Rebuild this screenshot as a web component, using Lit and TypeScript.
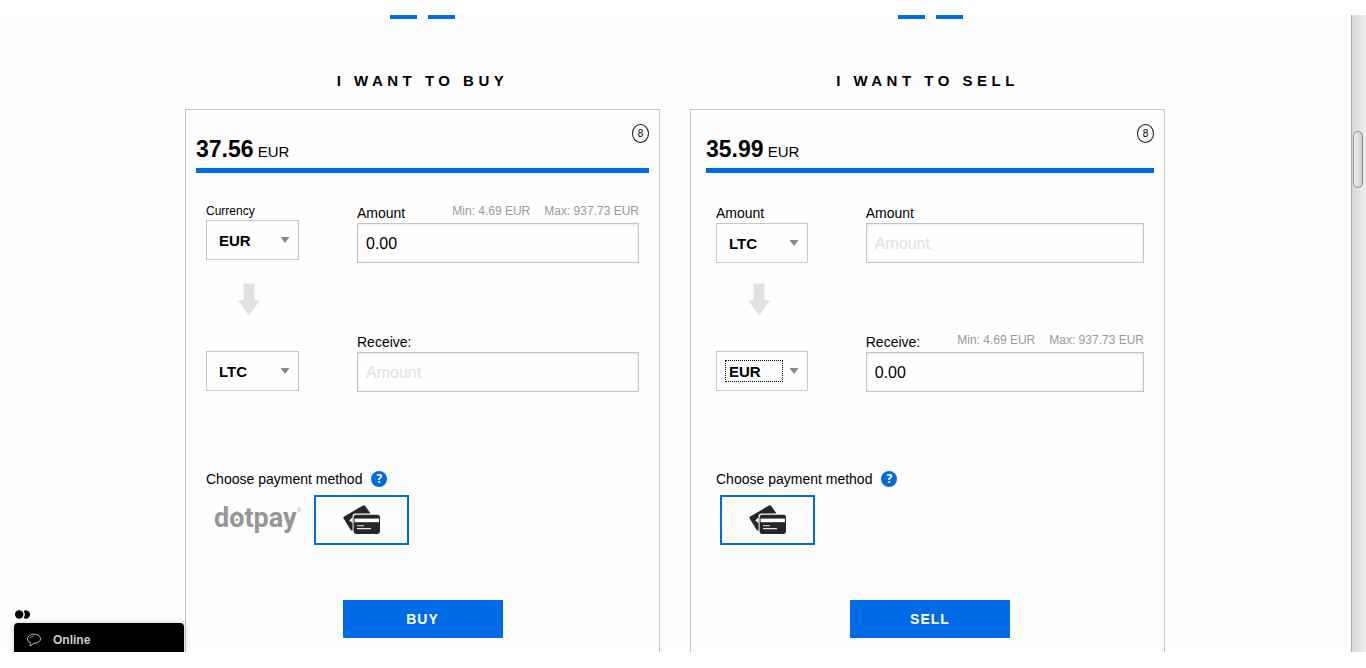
import { LitElement, html, css, svg, nothing } from "lit";
import { customElement, property } from "lit/decorators.js";

interface Side {
  id: string;
  title: string;
  price: string;
  fromLabel: string;
  smallLabel: boolean;
  from: string;
  to: string;
  focused: boolean;
  amount: string;
  receive: string;
  limitsOn: "amount" | "receive";
  dotpay: boolean;
  action: string;
}

const BUY: Side = {
  id: "buy",
  title: "I WANT TO BUY",
  price: "37.56",
  fromLabel: "Currency",
  smallLabel: true,
  from: "EUR",
  to: "LTC",
  focused: false,
  amount: "0.00",
  receive: "",
  limitsOn: "amount",
  dotpay: true,
  action: "BUY",
};

const SELL: Side = {
  id: "sell",
  title: "I WANT TO SELL",
  price: "35.99",
  fromLabel: "Amount",
  smallLabel: false,
  from: "LTC",
  to: "EUR",
  focused: true,
  amount: "",
  receive: "0.00",
  limitsOn: "receive",
  dotpay: false,
  action: "SELL",
};

const cards = svg`
  <g fill="#262626">
    <path d="M1.2 11.4 L20 0.5 Q21.5 -0.2 22.4 1.2 L27.5 8.6 H12.5 Q9.6 8.6 9.6 11.4 V25.6 Q8.2 26 7.4 24.6 L0.6 13.4 Q0 12.1 1.2 11.4 Z"/>
    <path d="M6.2 15.5 L9.6 12.2 V18 Z" fill="#fefefe"/>
    <rect x="10.6" y="9.8" width="26.4" height="19.2" rx="2.4"/>
  </g>
  <rect x="11.6" y="13.6" width="24.4" height="3.6" fill="#fefefe"/>
  <path d="M14 20.8 H21 M14 23.6 H28" stroke="#e8e8e8" stroke-width="1.1" fill="none"/>
`;

@customElement("trade-column")
class TradeColumn extends LitElement {
  @property({ attribute: false }) side!: Side;

  static styles = css`
    :host {
      display: flex;
      flex-direction: column;
      --inset-left: 10px;
      --inset-right: 10px;
    }
    :host([wide]) {
      --inset-left: 15px;
    }
    * {
      box-sizing: border-box;
    }
    .dashes {
      display: flex;
      justify-content: center;
      gap: 11px;
      padding-left: var(--inset-left);
      padding-right: var(--inset-right);
    }
    .dash {
      width: 27px;
      height: 4px;
      background: #006be6;
    }
    .title {
      margin: 52px 0 18px;
      font-size: 15px;
      line-height: 20px;
      font-weight: bold;
      letter-spacing: 0.3em;
      text-align: center;
    }
    .panel {
      flex: 1;
      border: 1px solid #c6c6c6;
      border-bottom: 0;
      padding: 14px var(--inset-right) 14px var(--inset-left);
    }
    .head {
      display: flex;
      justify-content: space-between;
      align-items: flex-start;
      border-bottom: 5px solid #006be6;
      padding-bottom: 2px;
    }
    .price {
      padding-top: 11px;
      font-size: 15px;
      line-height: 28px;
    }
    .value {
      font-size: 23px;
      font-weight: bold;
    }
    .timer {
      width: 17px;
      height: 19px;
      border: 1px solid #111;
      border-radius: 50%;
      font-size: 10px;
      line-height: 17px;
      text-align: center;
    }
    .form {
      padding: 30px 10px 0;
    }
    .fields {
      display: grid;
      grid-template-columns: 93fr 282fr;
      grid-template-rows: 60px 69px 60px;
      column-gap: 58px;
    }
    .caption {
      display: flex;
      justify-content: space-between;
      font-size: 14px;
      line-height: 20px;
    }
    .small,
    .limits {
      font-size: 12px;
      line-height: 17px;
    }
    .limits {
      display: flex;
      gap: 14px;
      color: #999;
    }
    .text {
      display: block;
      width: 100%;
      height: 40px;
      margin: 0;
      padding: 1px 8px 0;
      border: 1px solid #c4c4c4;
      border-radius: 0;
      background: #fefefe;
      box-shadow: inset 0 1px 3px rgba(0, 0, 0, 0.1);
      color: #000;
      font: 16px "Liberation Sans", Arial, sans-serif;
      outline: none;
    }
    .text::placeholder {
      color: #e0e0e0;
      opacity: 1;
    }
    .picker {
      display: grid;
    }
    .picker > * {
      grid-area: 1 / 1;
    }
    .select {
      appearance: none;
      width: 100%;
      height: 40px;
      margin: 0;
      padding: 1px 12px 0;
      border: 1px solid #c6c6c6;
      border-radius: 0;
      background: #fefefe;
      color: #000;
      font: bold 15px "Liberation Sans", Arial, sans-serif;
      outline: none;
    }
    .caret {
      place-self: center end;
      margin-right: 9px;
      pointer-events: none;
    }
    .ring {
      place-self: center start;
      width: 58px;
      height: 22px;
      margin-left: 9px;
      border: 1px dotted #000;
      pointer-events: none;
    }
    .target {
      align-self: end;
      padding-bottom: 1px;
    }
    .arrow {
      display: block;
      margin: 20px 0 0 32px;
    }
    .arrow-cell {
      grid-column: 1 / -1;
    }
    .method {
      display: flex;
      align-items: center;
      gap: 9px;
      margin-top: 77px;
      font-size: 14px;
      line-height: 20px;
    }
    .help {
      width: 16px;
      height: 16px;
      padding: 0;
      border: 0;
      border-radius: 50%;
      background: #006be6;
      color: #fff;
      font: bold 12px/16px "Open Sans", sans-serif;
      text-align: center;
    }
    .options {
      display: flex;
      gap: 9px;
      margin-top: 6px;
      padding-left: 4px;
    }
    .option {
      display: flex;
      align-items: center;
      justify-content: center;
      width: 95px;
      height: 50px;
      padding: 0;
      border: 0;
      background: none;
    }
    .chosen {
      border: 2px solid #006be6;
    }
    .brand {
      font: bold 27px Roboto, sans-serif;
    }
    .mark {
      font: 6px "Liberation Sans", Arial, sans-serif;
    }
    .submit {
      display: block;
      width: 160px;
      height: 38px;
      margin: 55px auto 0;
      padding: 0;
      border: 0;
      background: #006be6;
      color: #fff;
      font: bold 14px "Liberation Sans", Arial, sans-serif;
      letter-spacing: 1px;
    }
  `;

  private picker(id: string, value: string, label: string, focused = false) {
    return html`<div class="picker">
      <select class="select" id=${id} aria-label=${label}>
        <option>${value}</option>
      </select>
      ${focused ? html`<span class="ring"></span>` : nothing}
      <svg class="caret" width="10" height="6" viewBox="0 0 10 6">
        <path d="M0.5 0 H9.5 L5 6 Z" fill="#888" />
      </svg>
    </div>`;
  }

  private field(id: string, label: string, value: string, limits: boolean) {
    return html`<div>
      <div class="caption">
        <label for=${id}>${label}</label>
        ${limits
          ? html`<span class="limits"><span>Min: 4.69 EUR</span><span>Max: 937.73 EUR</span></span>`
          : nothing}
      </div>
      <input class="text" id=${id} type="text" placeholder="Amount" .value=${value} />
    </div>`;
  }

  private dotpay() {
    return html`<button class="option">
      <svg width="92" height="46" viewBox="-2 -8 92 46" fill="#969696">
        <text class="brand" x="0" y="22">dotpay</text>
        <circle cx="22.9" cy="14.8" r="1.3" />
        <path d="M20.5 8.6 L22.9 6 L25.3 8.6 Z" />
        <text class="mark" x="83" y="7">®</text>
      </svg>
    </button>`;
  }

  render() {
    const s = this.side;
    return html`
      <div class="dashes"><span class="dash"></span><span class="dash"></span></div>
      <h2 class="title">${s.title}</h2>
      <section class="panel">
        <header class="head">
          <div class="price"><span class="value">${s.price}</span> EUR</div>
          <span class="timer">8</span>
        </header>
        <div class="form">
          <div class="fields">
            <div>
              <label class=${s.smallLabel ? "caption small" : "caption"} for="${s.id}-from">${s.fromLabel}</label>
              ${this.picker(`${s.id}-from`, s.from, s.fromLabel)}
            </div>
            ${this.field(`${s.id}-amount`, "Amount", s.amount, s.limitsOn === "amount")}
            <div class="arrow-cell">
              <svg class="arrow" width="22" height="33" viewBox="0 0 22 33">
                <path d="M5.5 0.5 H16.5 V17.5 H22 L11 32.5 L0 17.5 H5.5 Z" fill="#e2e2e2" />
              </svg>
            </div>
            <div class="target">${this.picker(`${s.id}-to`, s.to, "Receive currency", s.focused)}</div>
            ${this.field(`${s.id}-receive`, "Receive:", s.receive, s.limitsOn === "receive")}
          </div>
          <div class="method">
            <span>Choose payment method</span>
            <button class="help" aria-label="Help">?</button>
          </div>
          <div class="options">
            ${s.dotpay ? this.dotpay() : nothing}
            <button class="option chosen" aria-label="Payment card">
              <svg width="38" height="30" viewBox="0 0 38 30">${cards}</svg>
            </button>
          </div>
        </div>
        <button class="submit">${s.action}</button>
      </section>
    `;
  }
}

@customElement("app-root")
class AppRoot extends LitElement {
  static styles = css`
    :host {
      display: flex;
      flex-direction: column;
      box-sizing: border-box;
      min-height: 100vh;
      padding: 15px 0 16px;
      background: #fff;
      color: #000;
      font-family: "Liberation Sans", Arial, sans-serif;
    }
    .frame {
      position: relative;
      display: flex;
      flex: 1;
      overflow: hidden;
      background: #fefefe;
    }
    .content {
      display: flex;
      flex: 1;
      justify-content: center;
      margin-right: 1px;
    }
    .columns {
      display: grid;
      grid-template-columns: 1fr 1fr;
      gap: 30px;
      width: 100%;
      max-width: 980px;
    }
    .track {
      box-sizing: border-box;
      width: 15px;
      padding: 116px 2px 0 1px;
      border-left: 1px solid #b0b0b0;
      background: linear-gradient(to right, #d6d6d6, #f0f0f0);
    }
    .thumb {
      box-sizing: border-box;
      width: 10px;
      height: 57px;
      border: 1px solid #8c8c8c;
      border-radius: 5px;
      background: linear-gradient(to right, #f0f0f0, #cfcfcf);
    }
    .chat {
      position: absolute;
      left: 14px;
      bottom: 0;
      width: 170px;
    }
    .dots {
      display: block;
      margin: 0 0 4px 1px;
    }
    .bar {
      display: flex;
      align-items: center;
      gap: 12px;
      width: 100%;
      height: 29px;
      padding: 4px 13px 0;
      border: 0;
      border-radius: 4px 4px 0 0;
      background: #000;
      box-shadow: 0 0 6px rgba(0, 0, 0, 0.2);
      color: #ccc;
      font: bold 12px "Liberation Sans", Arial, sans-serif;
    }
  `;

  render() {
    return html`
      <div class="frame">
        <main class="content">
          <div class="columns">
            <trade-column .side=${BUY}></trade-column>
            <trade-column wide .side=${SELL}></trade-column>
          </div>
        </main>
        <div class="track"><div class="thumb"></div></div>
        <aside class="chat">
          <svg class="dots" width="17" height="9" viewBox="0 0 17 9">
            <circle cx="4.2" cy="4.5" r="4.2" />
            <path d="M8.6 0.9 A4.2 4.2 0 1 1 8.6 8.1 A6.5 6.5 0 0 0 8.6 0.9 Z" />
          </svg>
          <button class="bar">
            <svg width="14" height="14" viewBox="0 0 14 14" fill="none" stroke="#c4c4c4">
              <path d="M3.4 9.6 C1.4 8.8 0.5 7.4 0.5 6 C0.5 3.2 3.4 1.2 7 1.2 C10.7 1.2 13.5 3.2 13.5 5.8 C13.5 8.6 10.6 10.3 6.6 10.3 C5.8 11.6 4.4 12.6 2.8 12.8 C3.6 11.8 3.7 10.8 3.4 9.6 Z" />
              <path d="M3 5.4 C3.4 4 4.8 3.2 6.6 3.1" stroke-width="0.8" />
            </svg>
            <span>Online</span>
          </button>
        </aside>
      </div>
    `;
  }
}
